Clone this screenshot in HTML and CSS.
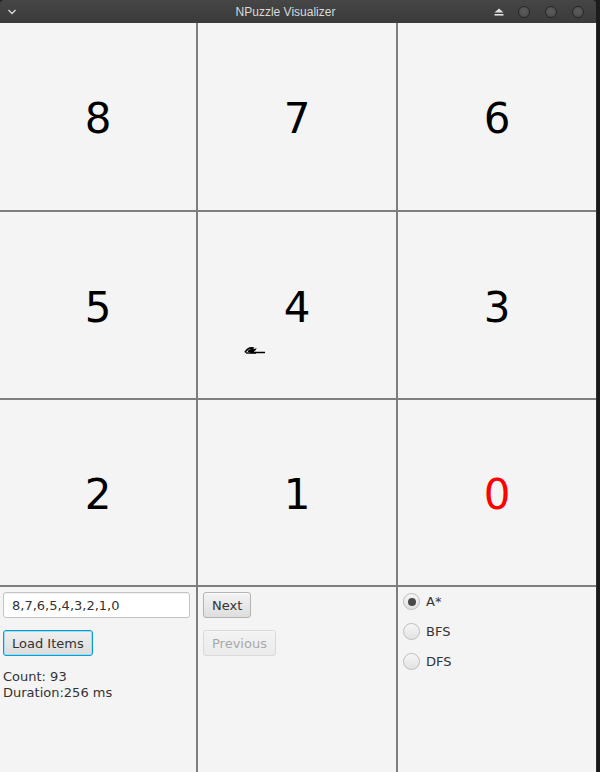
FILE: index.html
```html
<!DOCTYPE html>
<html>
<head>
<meta charset="utf-8">
<title>NPuzzle Visualizer</title>
<link rel="stylesheet" href="styles.css">
</head>
<body>
<div class="window">
  <div class="titlebar">
    <span class="menu-chev"><svg width="10" height="6" viewBox="0 0 10 6"><path d="M1.5 1 L5 4.5 L8.5 1" fill="none" stroke="#d8d8d8" stroke-width="1.4"/></svg></span>
    <span class="title">NPuzzle Visualizer</span>
    <span class="controls">
      <svg class="eject" width="10" height="8" viewBox="0 0 10 8"><path d="M5 0.5 L9.5 4.5 H0.5 Z" fill="#e0e0e0"/><rect x="0.5" y="6" width="9" height="1.6" fill="#e0e0e0"/></svg>
      <span class="wbtn"></span>
      <span class="wbtn"></span>
      <span class="wbtn"></span>
    </span>
  </div>
  <div class="body">
    <div class="grid">
      <div class="cell">8</div>
      <div class="cell">7</div>
      <div class="cell">6</div>
      <div class="cell">5</div>
      <div class="cell">4<svg class="cursor-mark" width="22" height="9" viewBox="0 0 22 9"><path d="M1 6.5 C3 3 6 1.5 9 2 C8 3.5 6 4.5 4 5.5 C7 5 9 4 11 3.5 C10 5 8 6 6 6.5 L21 6.5" fill="none" stroke="#000" stroke-width="1.6"/><path d="M2 7 L12 7" stroke="#000" stroke-width="1.4"/></svg></div>
      <div class="cell">3</div>
      <div class="cell">2</div>
      <div class="cell">1</div>
      <div class="cell blank">0</div>
      <div class="panel first">
        <div class="textfield">8,7,6,5,4,3,2,1,0</div>
        <button class="btn focused">Load Items</button>
        <div class="stats">
          <div>Count: 93</div>
          <div>Duration:256 ms</div>
        </div>
      </div>
      <div class="panel">
        <button class="btn">Next</button>
        <button class="btn disabled">Previous</button>
      </div>
      <div class="panel radios">
        <label class="radio"><span class="dot checked"></span>A*</label>
        <label class="radio"><span class="dot"></span>BFS</label>
        <label class="radio"><span class="dot"></span>DFS</label>
      </div>
    </div>
    <div class="frame-right"></div>
  </div>
</div>
</body>
</html>
```

FILE: styles.css
```css
html, body {
  margin: 0;
  padding: 0;
  background: #1c1c1c;
}
body {
  width: 600px;
  height: 772px;
  overflow: hidden;
  font-family: "DejaVu Sans", sans-serif;
}
.window {
  width: 600px;
  height: 772px;
  display: flex;
  flex-direction: column;
}
.titlebar {
  height: 23px;
  width: 596px;
  box-sizing: border-box;
  background: linear-gradient(#464646, #3a3a3a);
  border-radius: 4px 4px 0 0;
  display: flex;
  align-items: center;
  color: #dcdcdc;
}
.menu-chev {
  display: flex;
  padding-left: 7px;
  width: 10px;
}
.title {
  flex: 1;
  text-align: center;
  font-family: "Liberation Sans", sans-serif;
  font-size: 12px;
  padding-left: 60px;
  color: #dadada;
}
.controls {
  display: flex;
  align-items: center;
  padding-right: 12px;
}
.eject {
  margin-right: 14px;
}
.wbtn {
  width: 10px;
  height: 10px;
  border-radius: 50%;
  background: radial-gradient(circle at 50% 40%, #5c5c5c, #4a4a4a);
  border: 1.5px solid #262626;
  margin-left: 15px;
}
.wbtn:first-of-type {
  margin-left: 0;
}
.body {
  flex: 1;
  display: flex;
}
.grid {
  width: 596px;
  display: grid;
  grid-template-columns: 196px 198px 198px;
  grid-template-rows: 187px 186px 185px 185px;
  gap: 2px;
  background: #7e7e7e;
}
.frame-right {
  width: 4px;
  background: #1a1a1a;
  border-left: 1px solid #2e2e2e;
}
.cell {
  background: #f4f4f4;
  display: flex;
  align-items: center;
  justify-content: center;
  font-size: 42px;
  color: #000;
  position: relative;
  padding-top: 4px;
  box-sizing: border-box;
}
.cell.blank {
  color: #ff0000;
}
.cursor-mark {
  position: absolute;
  left: 46px;
  top: 134px;
}
.panel {
  background: #f4f4f4;
  padding: 5px 5px;
  box-sizing: border-box;
  display: flex;
  flex-direction: column;
  align-items: flex-start;
  font-size: 13px;
  color: #333;
}
.panel.first {
  padding-left: 3px;
}
.textfield {
  width: 187px;
  height: 26px;
  box-sizing: border-box;
  background: #fff;
  border: 1px solid #c3c3c3;
  border-radius: 3px;
  box-shadow: inset 0 1px 1px rgba(0,0,0,0.06);
  padding: 0 8px;
  display: flex;
  align-items: center;
  color: #333;
}
.btn {
  height: 26px;
  box-sizing: border-box;
  font-family: "DejaVu Sans", sans-serif;
  font-size: 13px;
  color: #333;
  padding: 0 8px;
  border: 1px solid #b3b3b3;
  border-radius: 3px;
  background: linear-gradient(#f3f3f3, #dedede);
  box-shadow: inset 0 1px 0 #fdfdfd;
  margin: 0 0 12px 0;
}
.btn.focused {
  margin-top: 12px;
  border: 1px solid #039ed3;
  box-shadow: inset 0 0 0 1px #9fdbf1;
  background: linear-gradient(#f0f0f0, #dcdcdc);
}
.btn.disabled {
  opacity: 0.4;
}
.stats {
  line-height: 16px;
  margin-top: 1px;
}
.radios {
  padding-top: 6px;
}
.radio {
  display: flex;
  align-items: center;
  height: 17px;
  margin-bottom: 13px;
  color: #333;
}
.dot {
  width: 17px;
  height: 17px;
  box-sizing: border-box;
  border-radius: 50%;
  border: 1px solid #bdbdbd;
  background: linear-gradient(#f6f6f6, #e2e2e2);
  margin-right: 6px;
  display: flex;
  align-items: center;
  justify-content: center;
}
.dot.checked::after {
  content: "";
  width: 8px;
  height: 8px;
  border-radius: 50%;
  background: #4a4a4a;
}
```
